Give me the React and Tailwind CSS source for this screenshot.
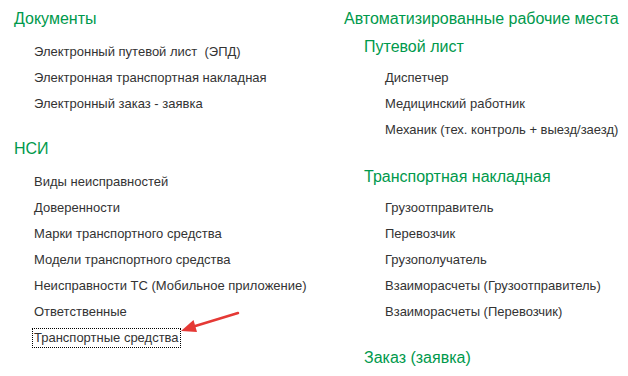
import React from "react";

const docs = [
  "Электронный путевой лист  (ЭПД)",
  "Электронная транспортная накладная",
  "Электронный заказ - заявка",
];

const nsi = [
  "Виды неисправностей",
  "Доверенности",
  "Марки транспортного средства",
  "Модели транспортного средства",
  "Неисправности ТС (Мобильное приложение)",
  "Ответственные",
  "Транспортные средства",
];

const waybill = ["Диспетчер", "Медицинский работник", "Механик (тех. контроль + выезд/заезд)"];

const consignment = [
  "Грузоотправитель",
  "Перевозчик",
  "Грузополучатель",
  "Взаиморасчеты (Грузоотправитель)",
  "Взаиморасчеты (Перевозчик)",
];

const Heading = ({ children, className = "" }) => (
  <div className={`h-5 leading-5 text-[16px] text-[#00994c] ${className}`}>{children}</div>
);

const Item = ({ label, focused }) => (
  <div className="h-[26px] flex items-center">
    {focused ? (
      <span className="border border-dotted border-black leading-[18px] -ml-[2px] px-px">{label}</span>
    ) : (
      <span>{label}</span>
    )}
  </div>
);

export default function App() {
  return (
    <div
      className="relative w-[628px] h-[376px] bg-white overflow-hidden text-[13px] text-[#333333] whitespace-pre"
      style={{ fontFamily: '"Liberation Sans", Arial, sans-serif' }}
    >
      <div className="flex pt-[9px]">
        {/* left column */}
        <div className="w-[330px] pl-[14px]">
          <Heading>Документы</Heading>
          <div className="pl-5 mt-[10px]">
            {docs.map((d) => (
              <Item key={d} label={d} />
            ))}
          </div>
          <Heading className="mt-[22px]">НСИ</Heading>
          <div className="pl-5 mt-[10px]">
            {nsi.map((d, i) => (
              <Item key={d} label={d} focused={i === nsi.length - 1} />
            ))}
          </div>
        </div>

        {/* right column */}
        <div className="flex-1 pl-[14px]">
          <Heading>Автоматизированные рабочие места</Heading>
          <div className="pl-5">
            <Heading className="mt-2">Путевой лист</Heading>
            <div className="pl-[21px] mt-2">
              {waybill.map((d) => (
                <Item key={d} label={d} />
              ))}
            </div>
            <Heading className="mt-6">Транспортная накладная</Heading>
            <div className="pl-[21px] mt-2">
              {consignment.map((d) => (
                <Item key={d} label={d} />
              ))}
            </div>
            <Heading className="mt-[23px]">Заказ (заявка)</Heading>
          </div>
        </div>
      </div>

      {/* red annotation arrow */}
      <svg className="absolute left-0 top-0 pointer-events-none" width="628" height="376">
        <line x1="238" y1="313" x2="192" y2="327" stroke="#e53935" strokeWidth="2.5" strokeLinecap="round" />
        <polygon points="181,331 193.5,320 197,332" fill="#e53935" />
      </svg>
    </div>
  );
}
